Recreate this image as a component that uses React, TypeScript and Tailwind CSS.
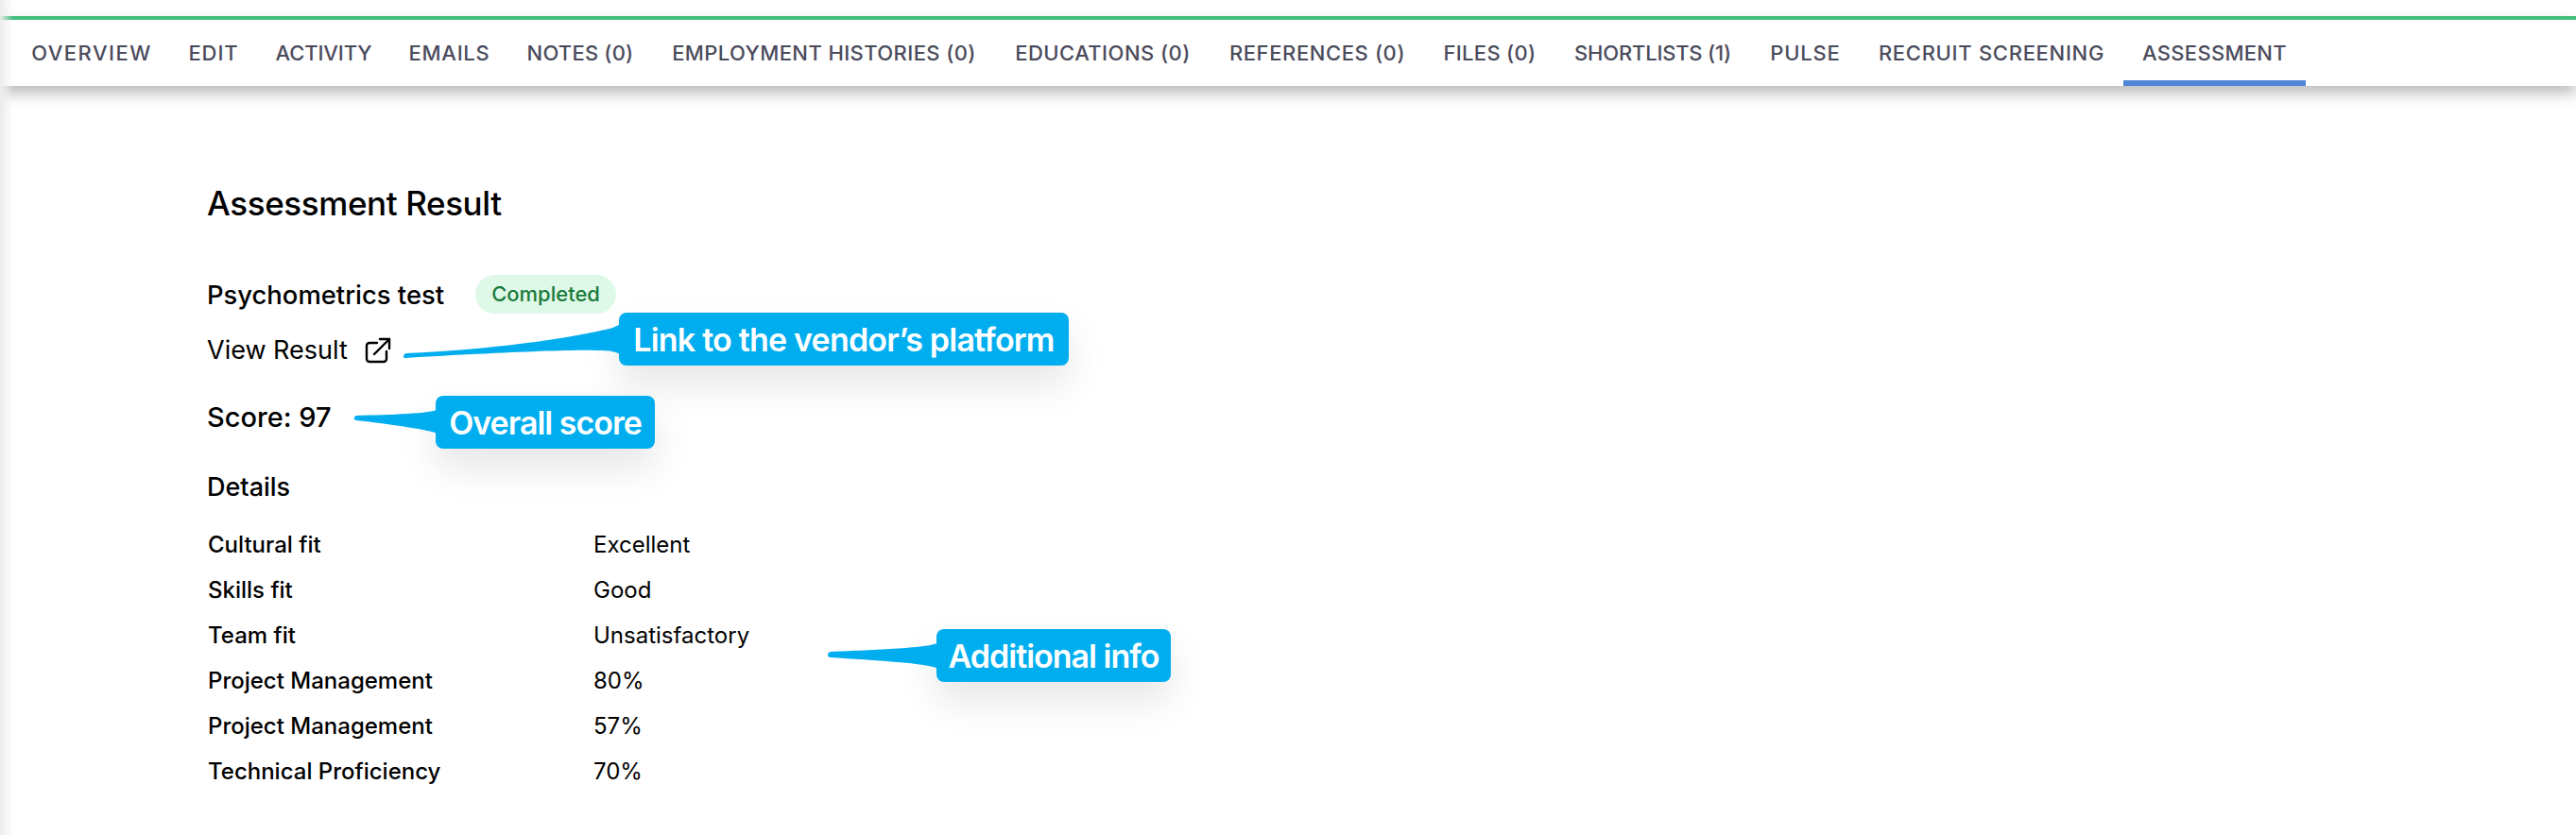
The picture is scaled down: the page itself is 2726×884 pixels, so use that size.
const tabs = [
  { label: "OVERVIEW", width: "w-[166px]", tracking: "tracking-[1.5px]" },
  { label: "EDIT", width: "w-[92px]", tracking: "tracking-[0.9px]" },
  { label: "ACTIVITY", width: "w-[141px]", tracking: "tracking-[-0.1px]" },
  { label: "EMAILS", width: "w-[125px]", tracking: "tracking-[0.7px]" },
  { label: "NOTES (0)", width: "w-[152px]", tracking: "tracking-[0.2px]" },
  { label: "EMPLOYMENT HISTORIES (0)", width: "w-[364px]", tracking: "tracking-[0.4px]" },
  { label: "EDUCATIONS (0)", width: "w-[226px]", tracking: "tracking-[0.45px]" },
  { label: "REFERENCES (0)", width: "w-[228px]", tracking: "tracking-[0.6px]" },
  { label: "FILES (0)", width: "w-[137px]", tracking: "tracking-[0.3px]" },
  { label: "SHORTLISTS (1)", width: "w-[208px]", tracking: "tracking-[-0.2px]" },
  { label: "PULSE", width: "w-[115px]", tracking: "tracking-[0.8px]" },
  { label: "RECRUIT SCREENING", width: "w-[279px]", tracking: "tracking-[0.7px]" },
  { label: "ASSESSMENT", width: "w-[193px]", tracking: "tracking-[0.3px]", active: true },
];

const details = [
  ["Cultural fit", "Excellent"],
  ["Skills fit", "Good"],
  ["Team fit", "Unsatisfactory"],
  ["Project Management", "80%"],
  ["Project Management", "57%"],
  ["Technical Proficiency", "70%"],
];

function Tail({ className, d, viewBox }: { className: string; d: string; viewBox: string }) {
  return (
    <svg className={className} viewBox={viewBox} fill="#00aeef">
      <path d={d} />
    </svg>
  );
}

function OpenIcon() {
  return (
    <svg className="ml-[18px] size-[28px]" viewBox="0 0 28 28" fill="none" stroke="#000" strokeWidth="2.4" strokeLinecap="round" strokeLinejoin="round">
      <path d="M13 6H5a3 3 0 0 0-3 3v14a3 3 0 0 0 3 3h15a3 3 0 0 0 3-3v-8" />
      <path d="M10 18 26 2" />
      <path d="M16 2h10v10" />
    </svg>
  );
}

export default function App() {
  return (
    <div className="relative h-[884px] w-full overflow-hidden bg-white font-['Inter',sans-serif] text-black">
      <div className="pointer-events-none absolute inset-y-0 left-0 z-10 w-[14px] bg-gradient-to-r from-[#ececec] to-transparent" />

      <nav className="mt-[17px] flex h-[74px] items-stretch border-t-4 border-[#43bd7c] bg-white pl-[14px] shadow-[0_8px_14px_rgba(0,0,0,0.26)]">
        {tabs.map((tab) => (
          <div
            key={tab.label}
            className={`flex ${tab.width} ${tab.tracking} items-center justify-center whitespace-nowrap border-b-[6px] pt-[6px] text-[22px] font-medium text-[#4b4b5c] ${
              tab.active ? "border-[#4f86d8]" : "border-transparent"
            }`}
          >
            {tab.label}
          </div>
        ))}
      </nav>

      <main className="pl-[219px]">
        <h1 className="mt-[100px] text-[35px] leading-[48px] font-medium tracking-[-0.4px]">Assessment Result</h1>

        <div className="mt-[52px] flex items-center">
          <span className="text-[27.4px] leading-[40px] font-medium">Psychometrics test</span>
          <span className="ml-[33px] flex h-[41px] w-[149px] items-center justify-center rounded-full bg-[#dff9e8] text-[22px] font-medium text-[#1a7a3a]">
            Completed
          </span>
        </div>

        <div className="mt-[19px] flex items-center">
          <span className="text-[27px] leading-[40px]">View Result</span>
          <OpenIcon />
        </div>

        <p className="mt-[31px] text-[29px] leading-[40px] font-medium">Score: 97</p>

        <h2 className="mt-[34px] text-[27px] leading-[40px] font-medium">Details</h2>

        <div className="mt-[17px] flex flex-col pl-[1px]">
          {details.map(([name, value], i) => (
            <div key={i} className="flex h-[48px] items-center text-[24px]">
              <span className="w-[408px] font-medium">{name}</span>
              <span>{value}</span>
            </div>
          ))}
        </div>
      </main>

      <div className="absolute top-[331px] left-[655px] flex h-[56px] w-[476px] items-center justify-center rounded-[8px] bg-[#00aeef] text-[34px] font-semibold tracking-[-0.8px] text-white shadow-[0_20px_40px_rgba(0,0,0,0.1)]">
        Link to the vendor’s platform
      </div>
      <Tail
        className="absolute top-[331px] left-[426px] h-[56px] w-[232px]"
        viewBox="0 0 232 56"
        d="M232 10 C228 16 215 18 200 21 C140 33 70 40 4 43 C0 44 0 49 4 48 C70 44 170 39 205 40 C220 40 228 41 232 46 Z"
      />

      <div className="absolute top-[419px] left-[461px] flex h-[56px] w-[232px] items-center justify-center rounded-[8px] bg-[#00aeef] text-[34px] font-semibold tracking-[-1px] text-white shadow-[0_20px_40px_rgba(0,0,0,0.1)]">
        Overall score
      </div>
      <Tail
        className="absolute top-[419px] left-[373px] h-[56px] w-[91px]"
        viewBox="0 0 91 56"
        d="M91 14 C84 19 40 20 4 21 C1 22 1 26 4 26 C40 30 80 36 91 40 Z"
      />

      <div className="absolute top-[666px] left-[991px] flex h-[56px] w-[248px] items-center justify-center rounded-[8px] bg-[#00aeef] text-[34px] font-semibold tracking-[-1px] text-white shadow-[0_20px_40px_rgba(0,0,0,0.1)]">
        Additional info
      </div>
      <Tail
        className="absolute top-[666px] left-[874px] h-[56px] w-[120px]"
        viewBox="0 0 120 56"
        d="M120 14 C112 20 50 22 5 24 C1 25 1 30 5 30 C50 33 108 36 120 42 Z"
      />
    </div>
  );
}
